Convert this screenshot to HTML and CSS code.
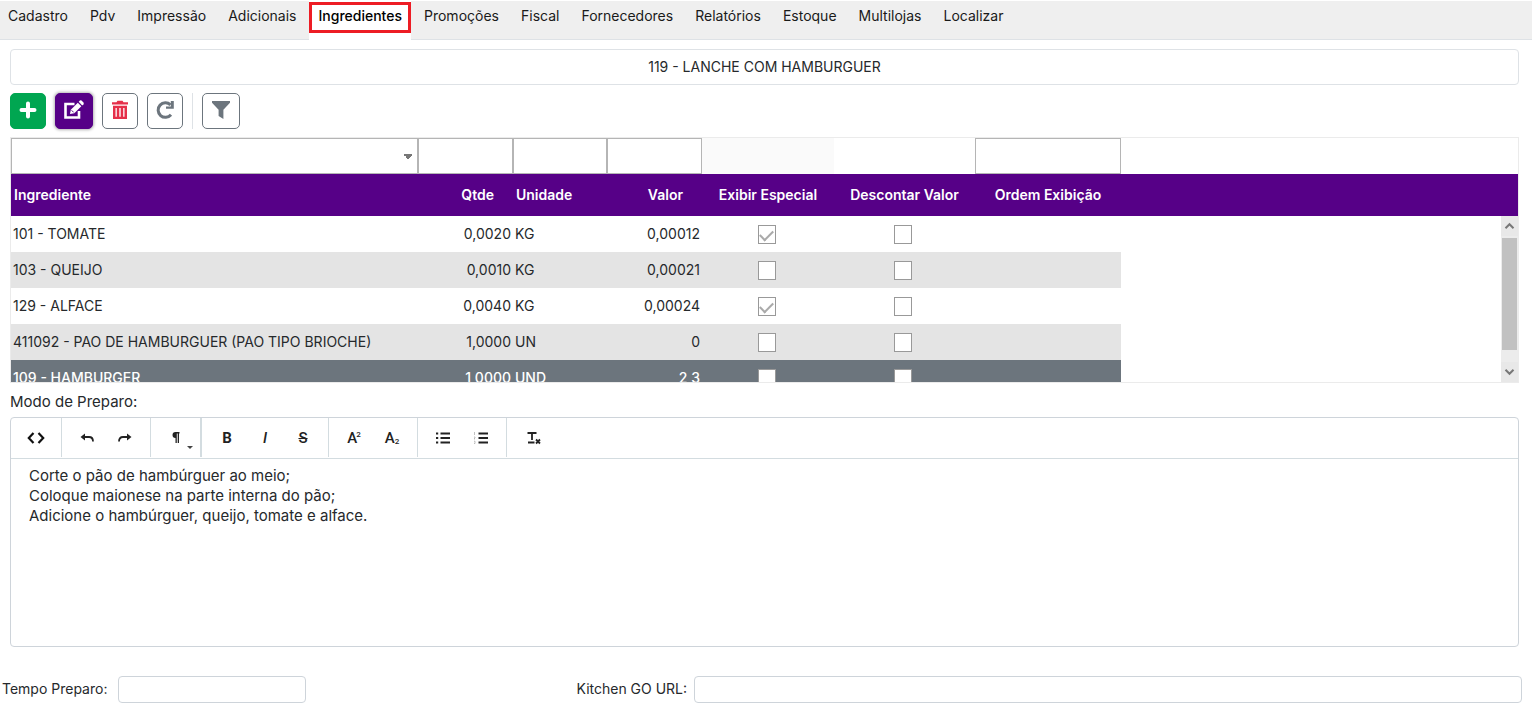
FILE: index.html
```html
<!DOCTYPE html>
<html lang="pt-BR">

<head>
    <meta charset="UTF-8">
    <meta name="viewport" content="width=device-width, initial-scale=1.0">
    <title>Produto - Ingredientes</title>
    <link rel="stylesheet" href="styles.css">
</head>

<body>
    <nav class="tabs">
        <a class="tab" href="#cadastro">Cadastro</a>
        <a class="tab" href="#pdv">Pdv</a>
        <a class="tab" href="#impressao">Impressão</a>
        <a class="tab" href="#adicionais">Adicionais</a>
        <a class="tab active" href="#ingredientes"><span>Ingredientes</span></a>
        <a class="tab" href="#promocoes">Promoções</a>
        <a class="tab" href="#fiscal">Fiscal</a>
        <a class="tab" href="#fornecedores">Fornecedores</a>
        <a class="tab" href="#relatorios">Relatórios</a>
        <a class="tab" href="#estoque">Estoque</a>
        <a class="tab" href="#multilojas">Multilojas</a>
        <a class="tab" href="#localizar">Localizar</a>
    </nav>

    <main class="content">
        <div class="product-name">119 - LANCHE COM HAMBURGUER</div>

        <div class="actions">
            <button type="button" class="btn btn-add" aria-label="Adicionar">
                <svg width="18" height="18" viewBox="0 0 18 18"><path d="M9 2.500v13M2.500 9h13" stroke="#fff" stroke-width="4" stroke-linecap="round"/></svg>
            </button>
            <button type="button" class="btn btn-wide btn-edit" aria-label="Editar">
                <svg width="22" height="20" viewBox="0 0 22 20">
                    <path d="M11.500 4H2.500v13.500H16V11" fill="none" stroke="#fff" stroke-width="2.600"/>
                    <path d="M7 14l.8-4.300 7-7 3.500 3.500-7 7z" fill="#fff"/>
                    <path d="M15.700 1.800l1.200-1.200q.8-.6 1.600 0l2 2q.6.800 0 1.600l-1.300 1.200z" fill="#fff"/>
                    <path d="M8.600 10.300l2.100 2.100" stroke="#560087" stroke-width="1"/>
                </svg>
            </button>
            <button type="button" class="btn" aria-label="Excluir">
                <svg width="18" height="20" viewBox="0 0 18 20" fill="#e5304a">
                    <path d="M1 2.200h4.500L6.500.8h5l1 1.400H17v2.300H1z"/>
                    <path fill-rule="evenodd" d="M2 5.800h14V19H2zM4.500 8v8.800h1.300V8zm3.800 0v8.800h1.400V8zm3.900 0v8.800h1.300V8z"/>
                </svg>
            </button>
            <button type="button" class="btn" aria-label="Atualizar">
                <svg width="20" height="20" viewBox="0 0 20 20">
                    <path d="M15.500 4.800A7.300 7.300 0 1 0 16 14.800" fill="none" stroke="#6c757d" stroke-width="3"/>
                    <path d="M18.800 1v7.800H11V6.500h4.800V1z" fill="#6c757d"/>
                </svg>
            </button>
            <span class="divider"></span>
            <button type="button" class="btn btn-wide" aria-label="Filtrar">
                <svg width="20" height="20" viewBox="0 0 20 20"><path d="M1 1h18v1.800l-6.600 7V19L7.600 16V9.800L1 2.800z" fill="#6c757d"/></svg>
            </button>
        </div>

        <div class="grid">
            <div class="filters">
                <select class="filter" aria-label="Ingrediente"><option></option></select>
                <input class="filter" type="text" aria-label="Qtde">
                <input class="filter" type="text" aria-label="Unidade">
                <input class="filter" type="text" aria-label="Valor">
                <span class="filter-off"></span>
                <span></span>
                <input class="filter" type="text" aria-label="Ordem Exibição">
            </div>
            <div class="grid-body">
                <div class="grid-rows">
                    <table class="ingredients">
                        <colgroup>
                            <col class="col-name">
                            <col class="col-qty">
                            <col class="col-unit">
                            <col class="col-value">
                            <col class="col-special">
                            <col class="col-discount">
                            <col class="col-order">
                            <col>
                        </colgroup>
                        <thead>
                            <tr>
                                <th>Ingrediente</th>
                                <th class="num">Qtde</th>
                                <th>Unidade</th>
                                <th class="num">Valor</th>
                                <th class="center">Exibir Especial</th>
                                <th class="center">Descontar Valor</th>
                                <th class="center">Ordem Exibição</th>
                                <td></td>
                            </tr>
                        </thead>
                        <tbody>
                            <tr>
                                <td>101 - TOMATE</td>
                                <td class="num">0,0020</td>
                                <td>KG</td>
                                <td class="num">0,00012</td>
                                <td class="center"><input type="checkbox" class="check" aria-label="Exibir Especial" checked></td>
                                <td class="center"><input type="checkbox" class="check" aria-label="Descontar Valor"></td>
                                <td></td>
                                <td class="rest"></td>
                            </tr>
                            <tr>
                                <td>103 - QUEIJO</td>
                                <td class="num">0,0010</td>
                                <td>KG</td>
                                <td class="num">0,00021</td>
                                <td class="center"><input type="checkbox" class="check" aria-label="Exibir Especial"></td>
                                <td class="center"><input type="checkbox" class="check" aria-label="Descontar Valor"></td>
                                <td></td>
                                <td class="rest"></td>
                            </tr>
                            <tr>
                                <td>129 - ALFACE</td>
                                <td class="num">0,0040</td>
                                <td>KG</td>
                                <td class="num">0,00024</td>
                                <td class="center"><input type="checkbox" class="check" aria-label="Exibir Especial" checked></td>
                                <td class="center"><input type="checkbox" class="check" aria-label="Descontar Valor"></td>
                                <td></td>
                                <td class="rest"></td>
                            </tr>
                            <tr>
                                <td>411092 - PAO DE HAMBURGUER (PAO TIPO BRIOCHE)</td>
                                <td class="num">1,0000</td>
                                <td>UN</td>
                                <td class="num">0</td>
                                <td class="center"><input type="checkbox" class="check" aria-label="Exibir Especial"></td>
                                <td class="center"><input type="checkbox" class="check" aria-label="Descontar Valor"></td>
                                <td></td>
                                <td class="rest"></td>
                            </tr>
                            <tr class="selected">
                                <td>109 - HAMBURGER</td>
                                <td class="num">1,0000</td>
                                <td>UND</td>
                                <td class="num">2,3</td>
                                <td class="center"><input type="checkbox" class="check" aria-label="Exibir Especial"></td>
                                <td class="center"><input type="checkbox" class="check" aria-label="Descontar Valor"></td>
                                <td></td>
                                <td class="rest"></td>
                            </tr>
                        </tbody>
                    </table>
                </div>
                <div class="scroll-side">
                    <div class="scrollbar">
                        <button type="button" class="scroll-btn" aria-label="Rolar para cima">
                            <svg width="11" height="8" viewBox="0 0 11 8"><path d="M1.500 6.200l4-4 4 4" fill="none" stroke="#777" stroke-width="2"/></svg>
                        </button>
                        <div class="scroll-track"><div class="scroll-thumb"></div></div>
                        <button type="button" class="scroll-btn" aria-label="Rolar para baixo">
                            <svg width="11" height="8" viewBox="0 0 11 8"><path d="M1.500 1.800l4 4 4-4" fill="none" stroke="#777" stroke-width="2"/></svg>
                        </button>
                    </div>
                </div>
            </div>
        </div>

        <label class="prep-label" for="preparo">Modo de Preparo:</label>
        <div class="editor">
            <div class="toolbar">
                <div class="group">
                    <button type="button" class="tool" aria-label="Código fonte">
                        <svg width="18" height="12" viewBox="0 0 18 12"><path d="M6.500 1L1.800 6l4.700 5M11.500 1L16.200 6l-4.700 5" fill="none" stroke="#111" stroke-width="2.200"/></svg>
                    </button>
                </div>
                <div class="group">
                    <button type="button" class="tool" aria-label="Desfazer">
                        <svg width="14" height="10" viewBox="0 0 14 10"><path d="M5 .5L.5 4 5 7.500z" fill="#222"/><path d="M3 4h6q4 0 4 4.500" fill="none" stroke="#222" stroke-width="1.800"/></svg>
                    </button>
                    <button type="button" class="tool" aria-label="Refazer">
                        <svg width="14" height="10" viewBox="0 0 14 10"><path d="M9 .5L13.500 4 9 7.500z" fill="#222"/><path d="M11 4H5Q1 4 1 8.500" fill="none" stroke="#222" stroke-width="1.800"/></svg>
                    </button>
                </div>
                <div class="group">
                    <button type="button" class="tool tool-menu" aria-label="Formatação">
                        <svg width="8" height="11" viewBox="0 0 8 11"><path d="M7.500 0H3.500a3 3 0 0 0 0 6v5h1.300V1.500h.9V11H7V1.500h.5z" fill="#222"/></svg>
                        <span class="caret"></span>
                    </button>
                </div>
                <div class="group group-format">
                    <button type="button" class="tool" aria-label="Negrito"><b>B</b></button>
                    <button type="button" class="tool" aria-label="Itálico"><i>I</i></button>
                    <button type="button" class="tool" aria-label="Tachado"><s>S</s></button>
                </div>
                <div class="group">
                    <button type="button" class="tool" aria-label="Sobrescrito">A<sup>2</sup></button>
                    <button type="button" class="tool" aria-label="Subscrito">A<sub>2</sub></button>
                </div>
                <div class="group">
                    <button type="button" class="tool" aria-label="Lista">
                        <svg width="16" height="12" viewBox="0 0 16 12"><path d="M1 1.500h2.200M1 6h2.200M1 10.500h2.200M5.500 1.500h9.500M5.500 6h9.500M5.500 10.500h9.500" stroke="#222" stroke-width="2"/></svg>
                    </button>
                    <button type="button" class="tool" aria-label="Lista numerada">
                        <svg width="16" height="12" viewBox="0 0 16 12"><path d="M5.500 1.500h9.500M5.500 6h9.500M5.500 10.500h9.500" stroke="#222" stroke-width="2"/><path d="M1.500 0v3M1 5h1v1L1 7h1M1 9.200h1v2.300H1" fill="none" stroke="#999" stroke-width=".6"/></svg>
                    </button>
                </div>
                <div class="group group-last">
                    <button type="button" class="tool" aria-label="Limpar formatação">
                        <svg width="14" height="14" viewBox="0 0 14 14"><path d="M.5 2h9M5 2v7M1 11.500h6.500M9 8.500l4 4M13 8.500l-4 4" fill="none" stroke="#222" stroke-width="1.800"/></svg>
                    </button>
                </div>
            </div>
            <textarea class="editor-text" id="preparo">Corte o pão de hambúrguer ao meio;
Coloque maionese na parte interna do pão;
Adicione o hambúrguer, queijo, tomate e alface.</textarea>
        </div>
    </main>

    <div class="footer-fields">
        <div class="field">
            <label for="tempo">Tempo Preparo:</label>
            <input id="tempo" class="input-time" type="text">
        </div>
        <div class="field">
            <label for="kitchen">Kitchen GO URL:</label>
            <input id="kitchen" class="input-url" type="text">
        </div>
    </div>
</body>

</html>
```
FILE: styles.css
```css
* {
    margin: 0;
    padding: 0;
    box-sizing: border-box;
}

body {
    font-family: Inter, "Liberation Sans", sans-serif;
    font-size: 14px;
    line-height: 20px;
    color: #26292c;
    background: #fff;
}

button,
input,
select,
textarea {
    font: inherit;
    color: inherit;
}

/* Tabs */
.tabs {
    display: flex;
    gap: 4px;
    height: 39px;
    margin-top: 1px;
    background: #efefef;
    border-bottom: 1px solid #dee2e6;
}

.tab {
    height: 39px;
    padding: 5px 9px;
    color: #1a1a1a;
    text-decoration: none;
}

.tab:first-child {
    padding-left: 8px;
}

.tab.active {
    padding: 1px 0;
    background: #fff;
    color: #000;
}

.tab.active span {
    display: block;
    padding: 1px 6px 4px;
    border: 3px solid #ed1c24;
    font-weight: 500;
}

.content {
    padding: 9px 13px 0 10px;
}

.product-name {
    height: 36px;
    line-height: 34px;
    text-align: center;
    border: 1px solid #dee2e6;
    border-radius: 4px;
}

/* Action buttons */
.actions {
    display: flex;
    align-items: center;
    gap: 9px;
    padding: 8px 0;
}

.btn {
    display: flex;
    align-items: center;
    justify-content: center;
    width: 36px;
    height: 36px;
    padding-bottom: 2px;
    background: #fff;
    border: 1px solid #6c757d;
    border-radius: 5px;
    cursor: pointer;
}

.btn-wide {
    width: 38px;
}

.btn-add {
    background: #00a651;
    border-color: #00a651;
}

.btn-edit {
    background: #560087;
    border-color: #560087;
    box-shadow: 0 0 3px 1px rgba(0, 0, 0, 0.3);
}

.divider {
    width: 1px;
    height: 36px;
    background: #dee2e6;
}

/* Ingredient grid */
.grid {
    border: 1px solid #ebebeb;
}

.filters {
    display: grid;
    grid-template-columns: 407px 95px 94px 95px 132px 141px 146px;
    height: 36px;
}

.filter {
    width: 100%;
    height: 36px;
    padding: 0 4px;
    background: #fff;
    border: 1px solid #b5b5b5;
    border-radius: 0;
}

select.filter {
    appearance: none;
    background: linear-gradient(to bottom right, #777 50%, transparent 50%) right 4px top 15px / 5px 5px no-repeat,
        linear-gradient(to bottom left, #777 50%, transparent 50%) right 9px top 15px / 5px 5px no-repeat;
}

.filter-off {
    background: #fafafa;
}

.grid-body {
    display: flex;
    height: 208px;
    background: linear-gradient(#560087 42px, #fff 42px);
}

.grid-rows {
    flex: 1;
    overflow: hidden;
}

.ingredients {
    width: 100%;
    table-layout: fixed;
    border-collapse: collapse;
}

.col-name {
    width: 407px;
}

.col-qty,
.col-value {
    width: 95px;
}

.col-unit {
    width: 94px;
}

.col-special {
    width: 132px;
}

.col-discount {
    width: 141px;
}

.col-order {
    width: 146px;
}

.ingredients th {
    height: 42px;
    padding: 0 3px;
    color: #fff;
    font-weight: 600;
    text-align: left;
}

.ingredients td {
    height: 36px;
    padding: 0 2px;
    white-space: nowrap;
}

.ingredients thead td {
    height: 42px;
}

.ingredients .num {
    text-align: right;
}

.ingredients th.num {
    padding-right: 19px;
}

.ingredients .center {
    text-align: center;
}

.ingredients td.center {
    padding-right: 5px;
}

.ingredients tbody tr:nth-child(even) {
    background: #e4e4e4;
}

.ingredients tbody .selected {
    background: #6c757d;
    color: #fff;
    font-weight: 500;
}

.ingredients .rest {
    background: #fff;
}

.check {
    appearance: none;
    display: block;
    width: 18px;
    height: 19px;
    margin: 1px auto 0;
    background: #fff;
    border: 1px solid #999;
}

.check:checked::before {
    content: "";
    display: block;
    width: 11px;
    height: 6px;
    margin: 4px auto 0;
    border-left: 2px solid #aaa;
    border-bottom: 2px solid #aaa;
    transform: rotate(-45deg);
}

.scroll-side {
    padding-top: 42px;
}

.scrollbar {
    display: flex;
    flex-direction: column;
    width: 17px;
    height: 100%;
    background: #ececec;
}

.scroll-btn {
    display: flex;
    align-items: center;
    justify-content: center;
    height: 20px;
    background: #e8e8e8;
    border: none;
}

.scroll-track {
    flex: 1;
    padding: 2px 1px 12px;
}

.scroll-thumb {
    height: 100%;
    background: #c1c1c1;
}

/* Preparation editor */
.prep-label {
    display: block;
    padding: 9px 0 5px;
    font-size: 15px;
}

.editor {
    border: 1px solid #ced4da;
    border-radius: 4px;
}

.toolbar {
    display: flex;
    height: 41px;
    border-bottom: 1px solid #d3dce0;
}

.group {
    display: flex;
    height: 39px;
    padding: 0 6px;
    border-right: 1px solid #d3dce0;
}

.group-format {
    box-shadow: -2px 0 0 #d3dce0;
}

.group-last {
    border-right: none;
    padding-left: 8px;
}

.tool {
    display: flex;
    align-items: center;
    justify-content: center;
    width: 38px;
    height: 39px;
    background: none;
    border: none;
    color: #222;
    font-family: Roboto, sans-serif;
    font-size: 15px;
    font-weight: 500;
    cursor: pointer;
}

.tool b {
    font-weight: 700;
}

.tool s {
    text-decoration-thickness: 1px;
}

.tool sup,
.tool sub {
    font-size: 8px;
    line-height: 8px;
}

.tool sup {
    padding-bottom: 6px;
    margin-left: -1px;
}

.tool sub {
    padding-top: 8px;
}

.tool-menu {
    position: relative;
}

.caret {
    position: absolute;
    right: 2px;
    bottom: 8px;
    border: 3px solid transparent;
    border-top-color: #444;
    border-bottom: none;
}

.editor-text {
    display: block;
    width: 100%;
    height: 187px;
    padding: 7px 18px;
    background: transparent;
    border: none;
    outline: none;
    resize: none;
    font-size: 15px;
}

/* Footer fields */
.footer-fields {
    display: grid;
    grid-template-columns: 3fr 5fr;
    padding-top: 29px;
}

.field {
    display: flex;
    align-items: center;
    gap: 7px;
    padding: 0 10px 0 2px;
}

.field label {
    min-width: 109px;
    padding-bottom: 2px;
}

.field input {
    height: 27px;
    padding: 0 6px;
    border: 1px solid #ced4da;
    border-radius: 4px;
}

.input-time {
    width: 188px;
}

.input-url {
    flex: 1;
}
```
